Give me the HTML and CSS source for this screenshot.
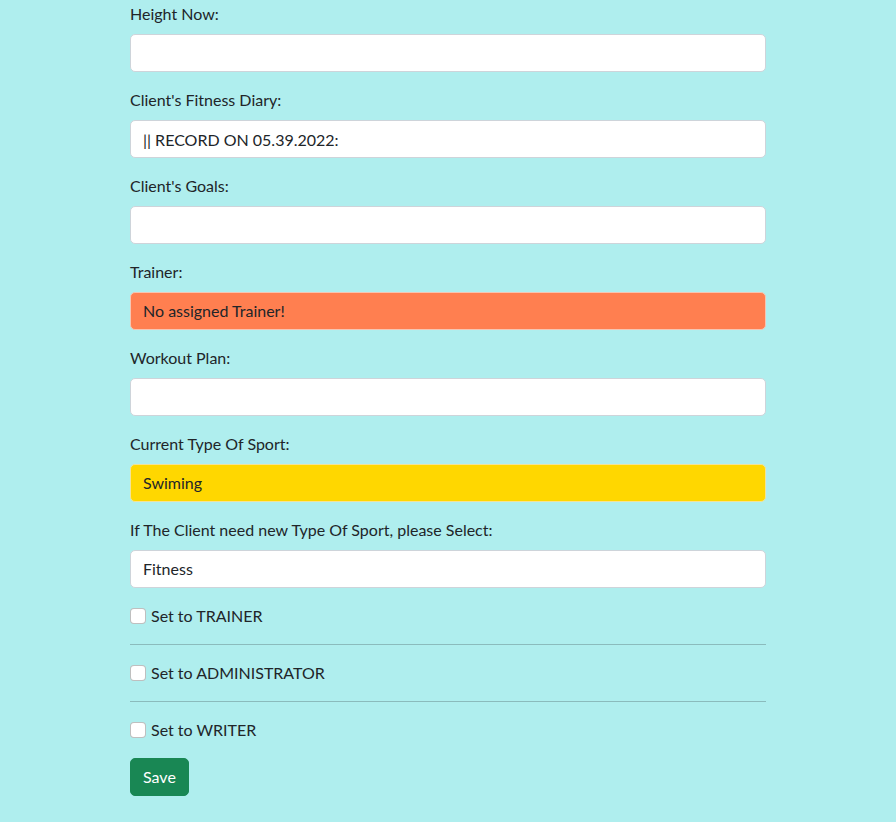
FILE: index.html
```html
<!DOCTYPE html>
<html lang="en">
<head>
<meta charset="utf-8">
<title>Edit Client</title>
<link rel="stylesheet" href="styles.css">
</head>
<body>
<main class="container">
  <form class="client-form">
    <div class="group">
      <label class="form-label">Height Now:</label>
      <input class="form-control" type="text" value="">
    </div>
    <div class="group">
      <label class="form-label">Client's Fitness Diary:</label>
      <input class="form-control" type="text" value="|| RECORD ON 05.39.2022:">
    </div>
    <div class="group">
      <label class="form-label">Client's Goals:</label>
      <input class="form-control" type="text" value="">
    </div>
    <div class="group">
      <label class="form-label">Trainer:</label>
      <div class="form-control coral">No assigned Trainer!</div>
    </div>
    <div class="group">
      <label class="form-label">Workout Plan:</label>
      <input class="form-control" type="text" value="">
    </div>
    <div class="group">
      <label class="form-label">Current Type Of Sport:</label>
      <div class="form-control gold">Swiming</div>
    </div>
    <div class="group">
      <label class="form-label">If The Client need new Type Of Sport, please Select:</label>
      <div class="form-control select">Fitness</div>
    </div>
    <label class="check-row"><input class="check" type="checkbox"> Set to TRAINER</label>
    <hr class="divider">
    <label class="check-row"><input class="check" type="checkbox"> Set to ADMINISTRATOR</label>
    <hr class="divider">
    <label class="check-row"><input class="check" type="checkbox"> Set to WRITER</label>
    <button class="btn-save" type="button">Save</button>
  </form>
</main>
</body>
</html>
```
FILE: styles.css
```css
* { box-sizing: border-box; }
html, body { margin: 0; padding: 0; }
body {
  background: #afeeee;
  color: #212529;
  font-family: Lato, "Noto Sans", sans-serif;
  font-size: 16px;
  line-height: 24px;
}
.container {
  width: 636px;
  margin: 0 auto;
  padding-top: 2px;
}
.client-form { display: block; }
.group { margin-bottom: 16px; }
.form-label {
  display: block;
  margin-bottom: 8px;
  line-height: 24px;
}
.form-control {
  display: block;
  width: 100%;
  height: 38px;
  padding: 6px 12px;
  font: inherit;
  line-height: 24px;
  color: #212529;
  background: #fff;
  border: 1px solid #ced4da;
  border-radius: 5px;
  outline: none;
}
.coral { background: #ff7f50; border-color: #f5c6b3; }
.gold { background: #ffd700; border-color: #f2e39a; }
.check-row {
  display: flex;
  align-items: center;
  gap: 5px;
  height: 24px;
}
.check {
  appearance: none;
  -webkit-appearance: none;
  width: 16px;
  height: 16px;
  margin: 0;
  background: #fff;
  border: 1px solid rgba(0, 0, 0, 0.25);
  border-radius: 4px;
  flex: none;
}
.divider {
  margin: 16px 0;
  border: 0;
  border-top: 1px solid #212529;
  opacity: 0.25;
  height: 0;
}
.btn-save {
  display: block;
  margin-top: 16px;
  height: 38px;
  padding: 6px 12px;
  font: inherit;
  line-height: 24px;
  color: #fff;
  background: #198754;
  border: 1px solid #198754;
  border-radius: 5px;
}
```
